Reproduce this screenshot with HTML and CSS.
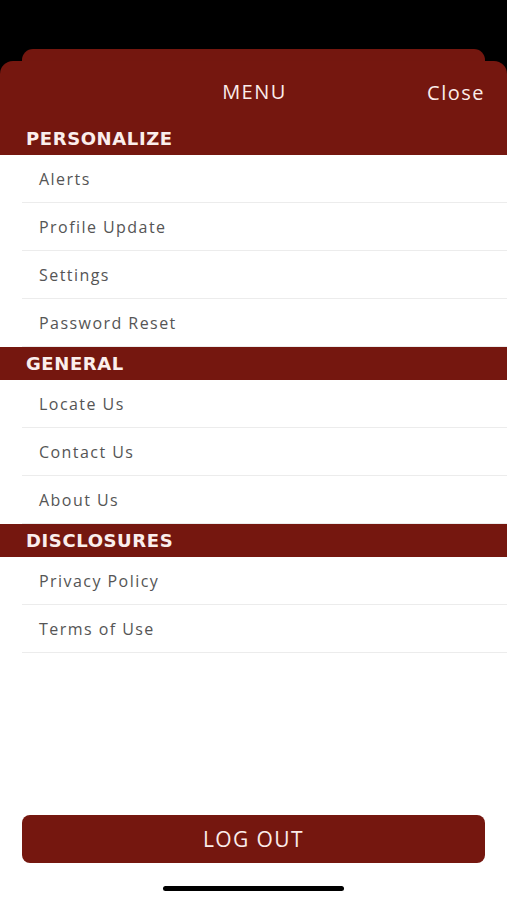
FILE: index.html
```html
<!DOCTYPE html>
<html>
<head>
<meta charset="utf-8">
<link rel="stylesheet" href="styles.css">
</head>
<body>
<div class="screen">
  <div class="top">
    <div class="back-card"></div>
    <div class="sheet-head">
      <div class="title-row">
        <span class="title">MENU</span>
        <span class="close">Close</span>
      </div>
      <div class="section">PERSONALIZE</div>
    </div>
  </div>
  <div class="list">
    <div class="row">Alerts</div>
    <div class="row">Profile Update</div>
    <div class="row">Settings</div>
    <div class="row">Password Reset</div>
    <div class="section">GENERAL</div>
    <div class="row">Locate Us</div>
    <div class="row">Contact Us</div>
    <div class="row">About Us</div>
    <div class="section">DISCLOSURES</div>
    <div class="row">Privacy Policy</div>
    <div class="row">Terms of Use</div>
  </div>
  <div class="footer">
    <button class="logout">LOG OUT</button>
    <div class="home-indicator"></div>
  </div>
</div>
</body>
</html>
```
FILE: styles.css
```css
* { box-sizing: border-box; }
html, body { margin: 0; padding: 0; }
body {
  font-family: "Open Sans", "Noto Sans", sans-serif;
  background: #fff;
}
.screen {
  width: 507px;
  height: 900px;
  display: flex;
  flex-direction: column;
  background: #fff;
  overflow: hidden;
}
.top {
  background: #000;
  padding-top: 49px;
}
.back-card {
  height: 14px;
  margin: 0 22px -2px;
  background: #74170f;
  border-radius: 11px 11px 0 0;
}
.sheet-head {
  position: relative;
  background: #75170f;
  border-radius: 13px 13px 0 0;
}
.title-row {
  height: 61px;
  display: flex;
  align-items: center;
  justify-content: center;
  position: relative;
  color: #fbecea;
  font-size: 20px;
}
.title { letter-spacing: 1.5px; margin-left: 2px; }
.close {
  position: absolute;
  right: 22px;
  top: 50%;
  transform: translateY(-50%);
  font-size: 20px;
  letter-spacing: 1.5px;
}
.section {
  height: 33px;
  background: #75170f;
  color: #fbeeec;
  font-family: "DejaVu Sans", sans-serif;
  font-weight: 700;
  font-size: 18px;
  display: flex;
  align-items: center;
  padding-left: 26px;
  letter-spacing: 0.6px;
}
.list {
  display: flex;
  flex-direction: column;
}
.row {
  height: 48px;
  margin-left: 22px;
  padding-left: 17px;
  padding-top: 1px;
  display: flex;
  align-items: center;
  font-size: 16px;
  color: #555;
  border-bottom: 1.5px solid #ececec;
  letter-spacing: 1.45px;
}
.footer {
  margin-top: auto;
  display: flex;
  flex-direction: column;
  align-items: center;
  padding-bottom: 9px;
}
.logout {
  width: 463px;
  height: 48px;
  border: none;
  border-radius: 8px;
  background: #75170f;
  color: #fbecea;
  font-family: "Open Sans", "Noto Sans", sans-serif;
  font-size: 21px;
  letter-spacing: 1.4px;
}
.home-indicator {
  margin-top: 23px;
  width: 181px;
  height: 5px;
  border-radius: 3px;
  background: #000;
}
```
